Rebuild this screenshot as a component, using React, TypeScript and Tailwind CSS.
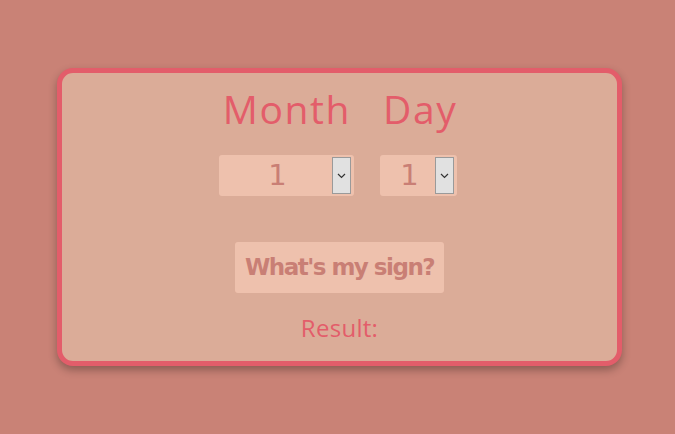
function FakeSelect({ width, value }: { width: string; value: string }) {
  return (
    <div className={`flex h-[41px] ${width} items-center rounded-[3px] bg-[#eec1ad] pr-[3px]`}>
      <span
        className="flex-1 pl-[4px] text-center text-[29px] leading-none text-[#c97f75]"
        style={{ fontFamily: "'DejaVu Sans', Verdana, sans-serif" }}
      >
        {value}
      </span>
      <div className="flex h-[37px] w-[19px] items-center justify-center border border-[#9a9a9a] bg-[#e1e1e1]">
        <svg width="9" height="6" viewBox="0 0 9 6">
          <path d="M1 1l3.5 3.5L8 1" fill="none" stroke="#333" strokeWidth="1.2" />
        </svg>
      </div>
    </div>
  );
}

export default function App() {
  return (
    <div className="min-h-[434px] w-full bg-[#c98276] pt-[68px]">
      <div className="ml-[57px] w-[565px] rounded-[16px] border-[5px] border-[#e35d6a] bg-[#dbac98] shadow-[0_4px_8px_rgba(0,0,0,0.3)]">
        <div
          className="flex flex-col items-center pb-[18px] pt-[12px] text-[#e35d6a]"
          style={{ fontFamily: "'Open Sans', sans-serif" }}
        >
          <div className="ml-[1px] flex gap-[32px] text-[39px] leading-[48px] tracking-[1.6px]">
            <span>Month</span>
            <span>Day</span>
          </div>
          <div className="mr-[3px] mt-[22px] flex gap-[26px]">
            <FakeSelect width="w-[135px]" value="1" />
            <FakeSelect width="w-[77px]" value="1" />
          </div>
          <button
            className="mt-[46px] h-[51px] w-[209px] rounded-[3px] bg-[#eec1ad] text-[23px] font-bold tracking-[-1.5px] text-[#c97f75]"
            style={{ fontFamily: "'DejaVu Sans', Verdana, sans-serif" }}
          >
            What's my sign?
          </button>
          <div className="mt-[20px] text-[24px] leading-[30px] tracking-[0.3px]">Result:</div>
        </div>
      </div>
    </div>
  );
}
